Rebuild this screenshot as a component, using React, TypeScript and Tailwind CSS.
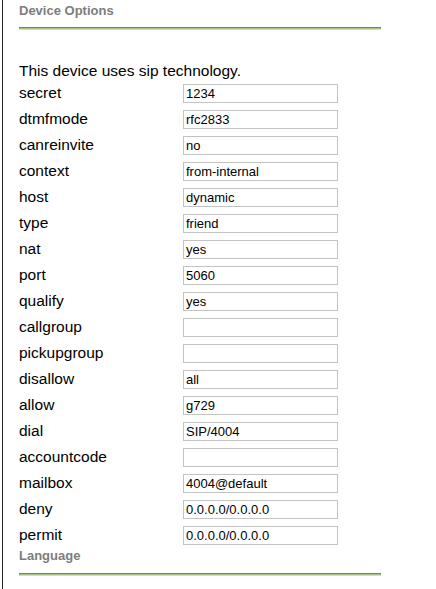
import React from "react";

const rows: [string, string][] = [
  ["secret", "1234"],
  ["dtmfmode", "rfc2833"],
  ["canreinvite", "no"],
  ["context", "from-internal"],
  ["host", "dynamic"],
  ["type", "friend"],
  ["nat", "yes"],
  ["port", "5060"],
  ["qualify", "yes"],
  ["callgroup", ""],
  ["pickupgroup", ""],
  ["disallow", "all"],
  ["allow", "g729"],
  ["dial", "SIP/4004"],
  ["accountcode", ""],
  ["mailbox", "4004@default"],
  ["deny", "0.0.0.0/0.0.0.0"],
  ["permit", "0.0.0.0/0.0.0.0"],
];

function Rule() {
  return (
    <div className="w-[362px]">
      <div className="h-px bg-[#7c7c7c]" />
      <div className="h-px bg-[#a6c184]" />
      <div className="h-px bg-[#cfe0b8]" />
    </div>
  );
}

export default function App() {
  return (
    <div
      className="min-h-[589px] bg-white text-black"
      style={{ fontFamily: '"Liberation Sans", Arial, sans-serif' }}
    >
      <div className="ml-[2px] min-h-[589px] border-l border-[#222] pl-[16px]">
        <div className="pt-[3px] text-[13px] font-bold leading-[15px] text-[#7d7d7d]">
          Device Options
        </div>
        <div className="mt-[9px]">
          <Rule />
        </div>
        <div className="mt-[32px] h-[18px] text-[15.5px] leading-[18px]">
          This device uses sip technology.
        </div>
        <div className="flex flex-col">
          {rows.map(([label, value]) => (
            <div key={label} className="flex h-[26px] items-center">
              <div className="w-[164px] text-[15.5px] leading-[18px]">{label}</div>
              <input
                readOnly
                value={value}
                className="h-[19px] w-[155px] border border-[#c3c3c3] bg-white px-[2px] text-[13px] leading-[17px] text-black outline-none"
                style={{ fontFamily: '"Liberation Sans", Arial, sans-serif' }}
              />
            </div>
          ))}
        </div>
        <div className="text-[13px] font-bold leading-[15px] text-[#7d7d7d]">
          Language
        </div>
        <div className="mt-[10px]">
          <Rule />
        </div>
      </div>
    </div>
  );
}
